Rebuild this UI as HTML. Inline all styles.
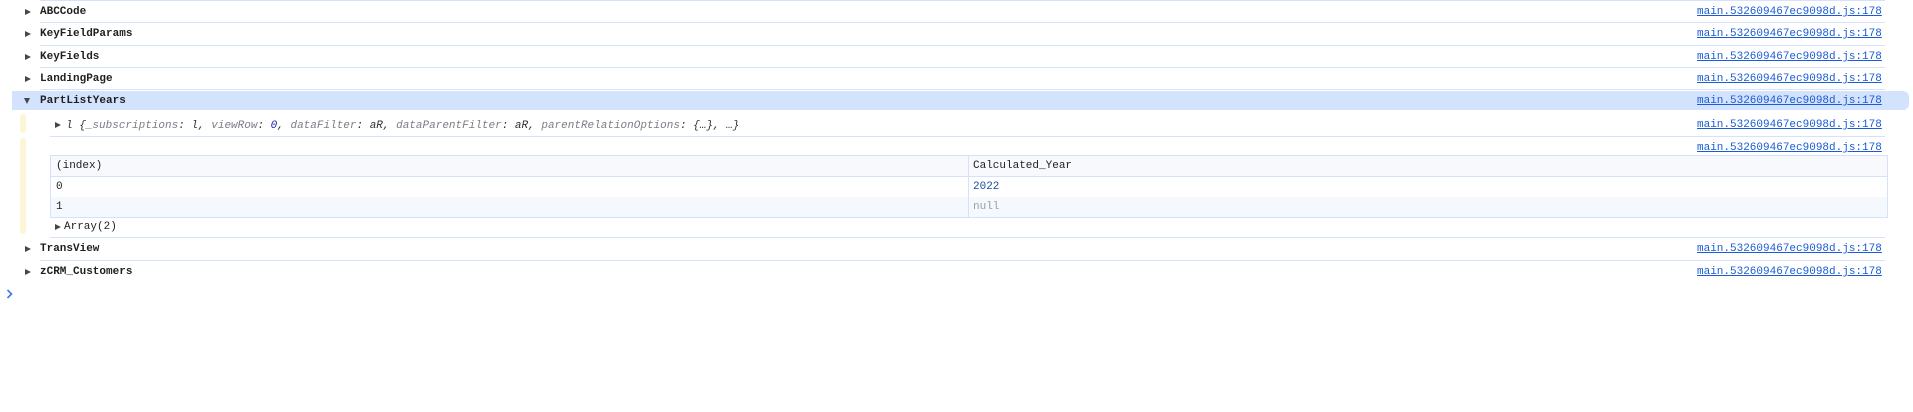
<!DOCTYPE html>
<html><head><meta charset="utf-8"><style>
html,body{margin:0;padding:0;background:#fff;width:1913px;height:412px;overflow:hidden;position:relative;font-family:"Liberation Mono",monospace;font-size:11px;color:#1f1f1f}
.a{position:absolute;white-space:pre;line-height:14px}
.sep{position:absolute;height:1px;background:#d6e2fb}
.lk{position:absolute;left:1697px;color:#1a5bd6;text-decoration:underline;white-space:pre;line-height:14px}
.tri{position:absolute;width:0;height:0;border-top:3.5px solid transparent;border-bottom:3.5px solid transparent;border-left:6px solid #474747}
.trd{position:absolute;width:0;height:0;border-left:3.5px solid transparent;border-right:3.5px solid transparent;border-top:6px solid #474747}
.b{font-weight:bold}
.g{color:#7a7e85;font-style:italic}
.d{color:#303030;font-style:italic}
.n{color:#1a1aa6;font-style:italic}
</style></head><body>
<div class="sep" style="left:40px;top:0;width:1845px"></div>

<div class="tri" style="left:25px;top:9px"></div>
<div class="a b" style="left:40px;top:5px">ABCCode</div>
<div class="lk" style="top:5px">main.532609467ec9098d.js:178</div>
<div class="sep" style="left:40px;top:22px;width:1845px"></div>

<div class="tri" style="left:25px;top:31px"></div>
<div class="a b" style="left:40px;top:27px">KeyFieldParams</div>
<div class="lk" style="top:27px">main.532609467ec9098d.js:178</div>
<div class="sep" style="left:40px;top:45px;width:1845px"></div>

<div class="tri" style="left:25px;top:54px"></div>
<div class="a b" style="left:40px;top:50px">KeyFields</div>
<div class="lk" style="top:50px">main.532609467ec9098d.js:178</div>
<div class="sep" style="left:40px;top:67px;width:1845px"></div>

<div class="tri" style="left:25px;top:76px"></div>
<div class="a b" style="left:40px;top:72px">LandingPage</div>
<div class="lk" style="top:72px">main.532609467ec9098d.js:178</div>
<div class="sep" style="left:40px;top:89px;width:1845px"></div>

<div style="position:absolute;left:12px;top:91px;width:1897px;height:19px;background:#d3e3fd;border-radius:0 6px 6px 0"></div>
<div class="trd" style="left:24px;top:98px"></div>
<div class="a b" style="left:40px;top:94px">PartListYears</div>
<div class="lk" style="top:94px">main.532609467ec9098d.js:178</div>

<div style="position:absolute;left:20px;top:114px;width:6px;height:19px;background:#fdf6d6;border-radius:3px"></div>
<div class="tri" style="left:55px;top:122px"></div>
<div class="a" style="left:66px;top:119px"><span class="d">l {</span><span class="g">_subscriptions</span><span class="d">: l, </span><span class="g">viewRow</span><span class="d">: </span><span class="n">0</span><span class="d">, </span><span class="g">dataFilter</span><span class="d">: aR, </span><span class="g">dataParentFilter</span><span class="d">: aR, </span><span class="g">parentRelationOptions</span><span class="d">: {…}, …}</span></div>
<div class="lk" style="top:118px">main.532609467ec9098d.js:178</div>
<div class="sep" style="left:50px;top:136px;width:1835px"></div>

<div style="position:absolute;left:20px;top:138px;width:6px;height:96px;background:#fdf6d6;border-radius:3px"></div>
<div class="lk" style="top:141px">main.532609467ec9098d.js:178</div>

<div style="position:absolute;left:50px;top:155px;width:1836px;height:61px;border:1px solid #d6e2fb;background:#fff"></div>
<div style="position:absolute;left:51px;top:156px;width:1836px;height:20px;background:#f8f9fc;border-bottom:1px solid #d6e2fb"></div>
<div style="position:absolute;left:51px;top:197px;width:1836px;height:20px;background:#f5f8fd"></div>
<div style="position:absolute;left:968px;top:156px;width:1px;height:61px;background:#d6e2fb"></div>
<div class="a" style="left:56px;top:159px">(index)</div>
<div class="a" style="left:973px;top:159px">Calculated_Year</div>
<div class="a" style="left:56px;top:180px">0</div>
<div class="a" style="left:973px;top:180px;color:#1a4fa6">2022</div>
<div class="a" style="left:56px;top:200px">1</div>
<div class="a" style="left:973px;top:200px;color:#9aa0a6">null</div>

<div class="tri" style="left:55px;top:224px"></div>
<div class="a" style="left:64px;top:220px">Array(2)</div>
<div class="sep" style="left:50px;top:237px;width:1835px"></div>

<div class="tri" style="left:25px;top:246px"></div>
<div class="a b" style="left:40px;top:242px">TransView</div>
<div class="lk" style="top:242px">main.532609467ec9098d.js:178</div>
<div class="sep" style="left:40px;top:260px;width:1845px"></div>

<div class="tri" style="left:25px;top:269px"></div>
<div class="a b" style="left:40px;top:265px">zCRM_Customers</div>
<div class="lk" style="top:265px">main.532609467ec9098d.js:178</div>

<svg style="position:absolute;left:5px;top:288px" width="10" height="12"><path d="M2.5 2 L6.5 6 L2.5 10" fill="none" stroke="#3b78e7" stroke-width="1.6"/></svg>
</body></html>
